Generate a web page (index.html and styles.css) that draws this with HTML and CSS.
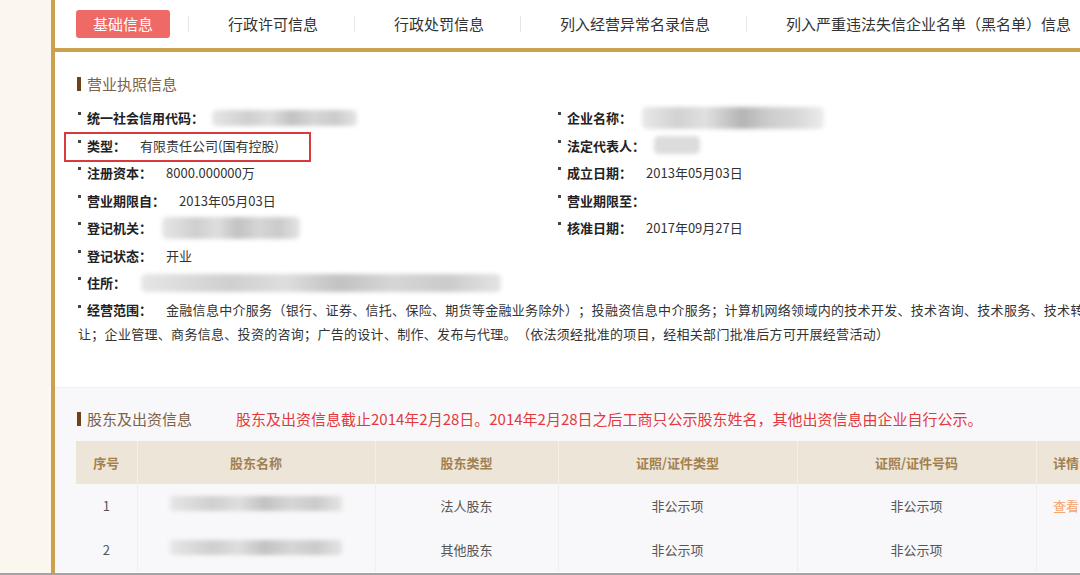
FILE: index.html
```html
<!DOCTYPE html>
<html lang="zh-CN">
<head>
    <meta charset="UTF-8">
    <meta name="viewport" content="width=device-width, initial-scale=1.0">
    <title>企业信用信息公示</title>
    <link rel="stylesheet" href="styles.css">
</head>
<body>
    <div class="page">
        <div class="side"></div>
        <div class="main">
            <ul class="tabs">
                <li class="tab active">基础信息</li>
                <li class="tab">行政许可信息</li>
                <li class="tab">行政处罚信息</li>
                <li class="tab">列入经营异常名录信息</li>
                <li class="tab">列入严重违法失信企业名单（黑名单）信息</li>
            </ul>

            <div class="section license">
                <h2 class="section-title">营业执照信息</h2>
                <div class="info-grid">
                    <div class="item"><span class="label">统一社会信用代码：</span><span class="blur blur-code"></span></div>
                    <div class="item"><span class="label">企业名称：</span><span class="blur blur-name"></span></div>
                    <div class="item highlight"><span class="label">类型：</span><span class="value">有限责任公司(国有控股)</span></div>
                    <div class="item"><span class="label">法定代表人：</span><span class="blur blur-person"></span></div>
                    <div class="item"><span class="label">注册资本：</span><span class="value">8000.000000万</span></div>
                    <div class="item"><span class="label">成立日期：</span><span class="value">2013年05月03日</span></div>
                    <div class="item"><span class="label">营业期限自：</span><span class="value">2013年05月03日</span></div>
                    <div class="item"><span class="label">营业期限至：</span></div>
                    <div class="item"><span class="label">登记机关：</span><span class="blur blur-office"></span></div>
                    <div class="item"><span class="label">核准日期：</span><span class="value">2017年09月27日</span></div>
                    <div class="item wide"><span class="label">登记状态：</span><span class="value">开业</span></div>
                    <div class="item wide"><span class="label">住所：</span><span class="blur blur-address"></span></div>
                    <p class="scope"><span class="label">经营范围：</span><span class="value">金融信息中介服务（银行、证券、信托、保险、期货等金融业务除外）；投融资信息中介服务；计算机网络领域内的技术开发、技术咨询、技术服务、技术转让；企业管理、商务信息、投资的咨询；广告的设计、制作、发布与代理。（依法须经批准的项目，经相关部门批准后方可开展经营活动）</span></p>
                </div>
            </div>

            <div class="section holders">
                <div class="holders-head">
                    <h2 class="section-title">股东及出资信息</h2>
                    <span class="notice">股东及出资信息截止2014年2月28日。2014年2月28日之后工商只公示股东姓名，其他出资信息由企业自行公示。</span>
                </div>
                <table class="holders-table">
                    <thead>
                        <tr>
                            <th class="col-no">序号</th>
                            <th class="col-name">股东名称</th>
                            <th class="col-type">股东类型</th>
                            <th class="col-cert">证照/证件类型</th>
                            <th class="col-cert">证照/证件号码</th>
                            <th class="col-detail">详情</th>
                        </tr>
                    </thead>
                    <tbody>
                        <tr>
                            <td>1</td>
                            <td><span class="blur blur-holder"></span></td>
                            <td>法人股东</td>
                            <td>非公示项</td>
                            <td>非公示项</td>
                            <td class="detail"><a href="#">查看</a></td>
                        </tr>
                        <tr>
                            <td>2</td>
                            <td><span class="blur blur-holder"></span></td>
                            <td>其他股东</td>
                            <td>非公示项</td>
                            <td>非公示项</td>
                            <td class="detail"></td>
                        </tr>
                    </tbody>
                </table>
            </div>
        </div>
    </div>
</body>
</html>
```

FILE: styles.css
```css
* {
    box-sizing: border-box;
}
body {
    margin: 0;
    font-family: "Noto Sans CJK SC", "Microsoft YaHei", sans-serif;
    font-size: 13px;
    color: #333;
    background-color: #fbf7ef;
    text-spacing-trim: space-all;
    overflow: hidden;
}
.page {
    display: flex;
    height: 575px;
    border-bottom: 2px solid #a3a3a3;
    overflow: hidden;
}
.side {
    flex: 0 0 51px;
}
.main {
    flex: 0 0 1075px;
    border-left: 4px solid #c9a14f;
    background-color: #fff;
}

/* tabs */
.tabs {
    display: flex;
    align-items: center;
    height: 52px;
    margin: 0;
    padding: 0 0 0 21px;
    list-style: none;
    border-bottom: 4px solid #c9a14f;
}
.tab {
    font-size: 15px;
    line-height: 16px;
    padding: 0 36px 0 39px;
    border-left: 1px solid #e6e6e6;
    white-space: nowrap;
    color: #333;
}
.tab.active {
    width: 94px;
    height: 28px;
    line-height: 28px;
    padding: 0;
    margin-right: 18px;
    text-align: center;
    border: none;
    border-radius: 3px;
    background-color: #ef6a66;
    color: #fff;
}

/* sections */
.section {
    padding: 22px 30px 41px 22px;
}
.section-title {
    display: flex;
    align-items: center;
    margin: 0;
    font-size: 15px;
    font-weight: normal;
    line-height: 20px;
    color: #7d6249;
    white-space: nowrap;
}
.section-title::before {
    content: "";
    width: 4px;
    height: 14px;
    margin-right: 6px;
    background-color: #6e4216;
}

.info-grid {
    display: grid;
    grid-template-columns: 480px 1fr;
    margin-top: 10px;
    padding-left: 1px;
}
.item {
    display: flex;
    align-items: center;
    height: 27.5px;
    white-space: nowrap;
}
.item::before,
.scope::before {
    content: "";
    flex: none;
    width: 3px;
    height: 3px;
    margin-right: 6px;
    background-color: #444;
    transform: translateY(-4px);
}
.item.wide {
    grid-column: 1 / -1;
}
.label {
    font-weight: bold;
    color: #222;
}
.value {
    margin-left: 14px;
    color: #333;
}
.highlight {
    position: relative;
}
.highlight::after {
    content: "";
    position: absolute;
    left: -14px;
    top: 0;
    width: 243px;
    height: 26px;
    border: 2px solid #d7393c;
}
.scope {
    grid-column: 1 / -1;
    margin: 1px 0 0;
    line-height: 24px;
}
.scope .value {
    letter-spacing: 0.3px;
}
.scope::before {
    display: inline-block;
    vertical-align: middle;
}

/* blurred values */
.blur {
    display: inline-block;
    height: 16px;
    border-radius: 5px;
    filter: blur(2px);
    background: linear-gradient(90deg, #e6e6e6, #cfcfcf 25%, #dedede 40%, #c2c2c2 55%, #d6d6d6 70%, #cbcbcb 85%, #e4e4e4);
}
.blur-code {
    width: 145px;
    margin-left: 8px;
}
.blur-name {
    width: 182px;
    height: 22px;
    margin-left: 10px;
    background: linear-gradient(90deg, #e8e8e8, #d2d2d2 20%, #e0e0e0 35%, #b4b4b4 55%, #cdcdcd 70%, #d8d8d8 85%, #ececec);
}
.blur-person {
    width: 46px;
    height: 18px;
    margin-left: 9px;
    background: #dcdcdc;
}
.blur-office {
    width: 138px;
    height: 22px;
    margin-left: 10px;
}
.blur-address {
    width: 360px;
    height: 18px;
    margin-left: 15px;
}
.blur-holder {
    width: 172px;
    height: 15px;
    border-radius: 2px;
}

/* shareholders */
.holders {
    padding: 21px 0 0 21px;
    background-color: #f8f8fa;
    border-top: 1px solid #efeff1;
}
.holders-head {
    display: flex;
    align-items: center;
    padding-left: 1px;
}
.notice {
    margin-left: 44px;
    font-size: 15px;
    line-height: 20px;
    color: #e4393c;
    white-space: nowrap;
}
.holders-table {
    width: 1020px;
    margin-top: 12px;
    border-collapse: collapse;
    table-layout: fixed;
}
.holders-table th {
    height: 43px;
    font-weight: bold;
    color: #a2804f;
    background-color: #ede5d8;
    border-right: 1px solid #f4efe7;
}
.holders-table td {
    height: 44px;
    text-align: center;
    color: #555;
    border-right: 1px solid #efeff2;
}
.col-no { width: 61px; }
.col-name { width: 238px; }
.col-type { width: 183px; }
.col-cert { width: 239px; }
.col-detail { width: 60px; }
.detail a {
    color: #f4a46c;
    text-decoration: none;
}
```
